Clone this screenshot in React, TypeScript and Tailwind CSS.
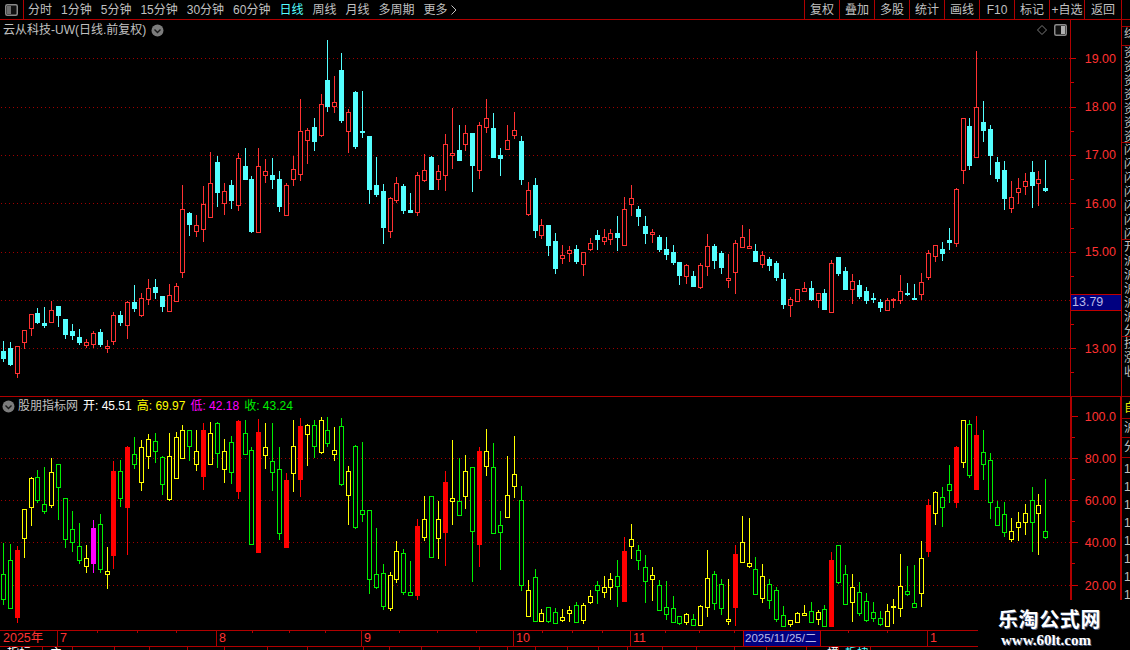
type Row = [number, number, number, number, number, string];
type Candle = { col: number; hi: number; top: number; bot: number; lo: number; kind: string };

// candles are read off 3x crops, so each block carries its crop origin
function seg(ox: number, oy: number, rows: Row[]): Candle[] {
  return rows.map(([zx, hi, top, bot, lo, kind]) => ({
    col: Math.floor(ox + zx / 3),
    hi: Math.round(oy + hi / 3),
    top: Math.round(oy + top / 3),
    bot: Math.round(oy + bot / 3),
    lo: Math.round(oy + lo / 3),
    kind,
  }));
}

const upperCandles: Candle[] = [
  ...seg(0, 270, [
    [10, 213, 243, 264, 272, "c"], [31, 216, 234, 282, 285, "c"], [52, 228, 228, 308, 320, "r"], [73, 180, 180, 215, 234, "r"],
    [94, 132, 132, 173, 195, "r"], [112, 114, 129, 156, 159, "c"], [133, 111, 159, 165, 171, "c"], [154, 93, 120, 155, 155, "r"],
    [175, 108, 108, 135, 168, "c"], [196, 147, 147, 192, 204, "c"], [217, 162, 183, 195, 207, "c"], [238, 177, 201, 216, 222, "c"],
    [259, 207, 216, 224, 231, "r"], [280, 183, 189, 221, 231, "r"], [301, 177, 186, 222, 228, "c"], [322, 210, 228, 234, 246, "r"],
    [340, 126, 135, 212, 222, "r"], [361, 123, 135, 156, 165, "c"], [382, 93, 96, 164, 204, "r"], [403, 45, 96, 114, 123, "c"],
    [424, 69, 84, 135, 138, "r"], [445, 27, 54, 87, 102, "r"], [466, 27, 51, 66, 84, "c"], [487, 78, 78, 108, 123, "c"],
    [508, 42, 75, 123, 123, "r"], [529, 39, 48, 93, 93, "r"],
  ]),
  ...seg(0, 130, [
    [547, 165, 237, 425, 441, "r"], [568, 246, 249, 282, 315, "c"], [589, 255, 285, 303, 318, "r"], [610, 168, 222, 296, 333, "r"],
    [631, 66, 159, 261, 261, "r"], [652, 78, 96, 186, 228, "c"], [673, 159, 183, 219, 252, "r"], [694, 150, 165, 210, 234, "c"],
    [715, 69, 84, 225, 240, "r"], [736, 54, 108, 147, 147, "c"], [754, 138, 147, 303, 306, "c"], [775, 54, 108, 306, 306, "r"],
    [796, 87, 123, 135, 156, "r"], [817, 84, 135, 147, 174, "c"], [838, 123, 147, 228, 243, "c"],
  ]),
  ...seg(280, 30, [
    [19, 459, 465, 555, 555, "r"], [40, 378, 417, 447, 465, "r"], [61, 207, 303, 432, 450, "r"], [82, 294, 300, 330, 399, "r"],
    [103, 264, 291, 333, 360, "c"], [124, 192, 222, 315, 318, "r"], [142, 30, 150, 228, 243, "c"], [163, 138, 216, 228, 246, "r"],
    [184, 69, 120, 270, 276, "c"], [205, 237, 246, 303, 366, "r"], [226, 183, 186, 348, 354, "c"], [247, 183, 303, 306, 321, "c"],
    [268, 318, 318, 477, 519, "c"], [289, 381, 465, 492, 498, "c"], [310, 462, 483, 591, 639, "c"], [331, 501, 504, 603, 621, "r"],
    [349, 441, 459, 510, 516, "r"], [370, 462, 468, 540, 549, "c"], [391, 489, 540, 546, 546, "c"], [412, 426, 435, 546, 555, "r"],
    [433, 372, 420, 450, 453, "r"], [454, 378, 381, 477, 477, "c"], [475, 405, 423, 447, 477, "r"], [496, 312, 342, 435, 480, "r"],
    [517, 234, 369, 375, 414, "r"], [538, 285, 360, 390, 390, "c"], [556, 285, 309, 342, 360, "r"], [577, 309, 309, 405, 483, "c"],
    [598, 276, 285, 420, 444, "r"], [619, 207, 264, 291, 306, "r"], [640, 249, 294, 381, 381, "c"], [661, 354, 375, 384, 435, "c"],
    [682, 285, 330, 357, 357, "r"], [703, 246, 300, 315, 324, "r"], [724, 318, 333, 447, 462, "c"], [745, 456, 480, 552, 555, "r"],
    [766, 444, 465, 600, 621, "c"], [784, 567, 585, 615, 624, "r"], [805, 585, 585, 645, 675, "c"], [826, 609, 633, 714, 729, "c"],
  ]),
  ...seg(560, 170, [
    [7, 225, 255, 264, 279, "r"], [28, 228, 240, 249, 273, "r"], [49, 225, 237, 273, 279, "c"], [70, 246, 246, 282, 315, "r"],
    [91, 204, 219, 237, 240, "r"], [112, 180, 195, 207, 237, "c"], [133, 177, 201, 213, 222, "r"], [151, 177, 189, 207, 222, "r"],
    [172, 138, 189, 201, 240, "c"], [193, 81, 117, 225, 225, "r"], [214, 45, 84, 102, 135, "r"], [235, 108, 117, 138, 165, "c"],
    [256, 138, 168, 189, 219, "c"], [277, 177, 186, 192, 216, "r"], [298, 195, 201, 237, 243, "c"], [319, 201, 237, 252, 267, "c"],
    [340, 225, 246, 276, 282, "c"], [358, 276, 276, 315, 342, "c"], [379, 282, 285, 318, 339, "r"], [400, 303, 318, 348, 348, "c"],
    [421, 279, 285, 351, 354, "r"], [442, 192, 228, 288, 315, "r"], [463, 222, 228, 270, 294, "c"], [484, 243, 249, 291, 309, "c"],
    [505, 252, 324, 330, 351, "r"], [526, 210, 219, 306, 369, "r"], [547, 165, 201, 231, 231, "r"], [568, 177, 228, 234, 234, "r"],
    [586, 222, 243, 273, 273, "c"], [607, 243, 255, 282, 291, "r"], [628, 261, 267, 285, 300, "c"], [649, 273, 279, 321, 330, "c"],
    [670, 309, 327, 402, 414, "c"], [691, 381, 387, 405, 438, "r"], [712, 357, 357, 393, 393, "r"], [733, 336, 354, 363, 363, "r"],
    [754, 333, 354, 387, 390, "c"], [775, 369, 369, 390, 411, "r"], [793, 357, 369, 417, 417, "c"], [814, 270, 279, 426, 426, "r"],
    [835, 261, 261, 309, 315, "c"],
  ]),
  ...seg(840, 40, [
    [16, 681, 693, 747, 747, "c"], [37, 702, 723, 747, 789, "r"], [58, 720, 735, 768, 774, "c"], [79, 741, 753, 780, 789, "c"],
    [100, 759, 774, 777, 786, "c"], [121, 777, 786, 801, 813, "c"], [142, 774, 780, 809, 809, "r"], [160, 774, 776, 779, 801, "r"],
    [181, 705, 753, 780, 789, "r"], [202, 729, 760, 763, 765, "c"], [223, 732, 775, 777, 777, "c"], [244, 699, 726, 762, 777, "r"],
    [265, 630, 639, 711, 717, "r"], [286, 615, 615, 648, 663, "r"], [307, 606, 627, 639, 660, "c"], [328, 564, 600, 606, 627, "c"],
    [349, 444, 447, 609, 618, "r"], [370, 234, 234, 390, 429, "r"], [388, 234, 258, 375, 387, "c"], [409, 33, 201, 351, 351, "r"],
    [430, 183, 246, 270, 303, "c"], [451, 255, 267, 345, 402, "c"], [472, 351, 366, 414, 423, "c"], [493, 363, 390, 474, 507, "c"],
    [514, 423, 471, 504, 516, "r"], [535, 414, 444, 456, 489, "r"], [556, 399, 423, 438, 462, "r"], [577, 363, 396, 435, 501, "c"],
    [595, 393, 417, 429, 495, "r"], [616, 360, 444, 450, 453, "c"],
  ]),
];

const lowerCandles: Candle[] = [
  ...seg(0, 395, [
    [10, 444, 537, 612, 627, "g"], [31, 447, 495, 639, 639, "g"], [52, 453, 465, 666, 681, "R"], [73, 342, 342, 429, 486, "y"],
    [94, 247, 249, 336, 390, "y"], [112, 225, 246, 315, 321, "g"], [133, 216, 327, 348, 354, "g"], [154, 189, 231, 330, 336, "y"],
    [175, 207, 207, 276, 372, "g"], [196, 309, 309, 432, 456, "g"], [217, 348, 402, 441, 468, "g"], [238, 384, 453, 495, 504, "g"],
    [259, 450, 489, 513, 531, "y"], [280, 375, 399, 504, 531, "m"], [301, 357, 387, 522, 531, "g"], [322, 456, 528, 537, 579, "y"],
    [340, 198, 228, 480, 519, "R"], [361, 195, 228, 309, 333, "g"], [382, 153, 156, 336, 477, "R"], [403, 126, 177, 207, 219, "g"],
    [424, 135, 156, 261, 285, "y"], [445, 117, 132, 183, 219, "y"], [466, 114, 138, 168, 201, "g"], [487, 183, 186, 267, 297, "g"],
    [508, 114, 183, 312, 315, "y"], [529, 111, 126, 249, 249, "y"], [547, 90, 105, 189, 189, "y"], [568, 105, 105, 153, 195, "g"],
    [589, 105, 168, 207, 225, "y"], [610, 84, 105, 243, 282, "R"], [631, 81, 114, 207, 207, "y"], [652, 81, 84, 174, 216, "g"],
    [673, 132, 168, 222, 261, "y"], [694, 123, 141, 231, 264, "g"], [715, 75, 78, 288, 309, "R"], [736, 75, 114, 177, 177, "g"],
    [754, 156, 165, 447, 447, "g"], [775, 72, 111, 471, 471, "R"], [796, 84, 156, 180, 219, "y"], [817, 84, 198, 231, 285, "g"],
    [838, 156, 222, 414, 432, "g"], [859, 234, 255, 456, 456, "R"], [880, 75, 153, 234, 288, "y"], [901, 69, 93, 252, 303, "R"],
    [922, 87, 90, 117, 210, "y"], [943, 75, 90, 153, 186, "g"], [964, 66, 75, 171, 174, "y"], [982, 66, 105, 144, 153, "g"],
    [1003, 96, 165, 177, 195, "y"], [1024, 69, 93, 267, 270, "g"], [1045, 213, 228, 300, 387, "y"], [1066, 150, 153, 396, 399, "g"],
  ]),
  ...seg(360, 395, [
    [7, 141, 345, 357, 378, "g"], [28, 345, 345, 552, 594, "g"], [49, 399, 537, 576, 579, "g"], [70, 507, 534, 633, 642, "g"],
    [91, 531, 540, 639, 645, "y"], [109, 438, 468, 552, 561, "y"], [130, 462, 474, 591, 597, "g"], [151, 498, 591, 600, 600, "g"],
    [172, 372, 393, 600, 612, "R"], [193, 303, 372, 426, 435, "y"], [214, 303, 303, 486, 486, "g"], [235, 318, 372, 429, 489, "y"],
    [256, 228, 261, 411, 510, "R"], [277, 135, 309, 318, 387, "y"], [298, 189, 318, 360, 360, "g"], [316, 180, 228, 303, 339, "y"],
    [337, 216, 216, 408, 558, "g"], [358, 156, 168, 447, 513, "R"], [379, 102, 168, 213, 240, "y"], [400, 144, 216, 414, 414, "g"],
    [421, 348, 390, 411, 522, "g"], [442, 183, 300, 366, 366, "y"], [463, 123, 237, 273, 306, "y"], [484, 273, 315, 570, 585, "g"],
    [505, 555, 585, 663, 663, "y"], [526, 522, 546, 678, 678, "g"], [544, 642, 654, 678, 678, "y"], [565, 636, 636, 678, 681, "g"],
    [586, 639, 651, 684, 684, "g"], [607, 642, 666, 675, 678, "y"], [628, 633, 645, 654, 678, "y"], [649, 621, 630, 681, 681, "g"],
    [670, 624, 630, 675, 684, "y"], [691, 585, 603, 621, 624, "y"], [712, 558, 570, 585, 624, "g"], [733, 543, 576, 591, 606, "y"],
    [751, 534, 552, 576, 612, "y"], [772, 495, 543, 573, 633, "g"], [793, 426, 468, 618, 618, "R"], [814, 387, 432, 453, 489, "y"],
    [835, 450, 465, 495, 522, "g"], [856, 480, 516, 558, 621, "g"], [877, 516, 540, 552, 615, "y"], [898, 555, 570, 645, 645, "g"],
    [919, 558, 636, 657, 672, "g"], [940, 603, 639, 681, 681, "g"], [958, 663, 663, 684, 687, "g"], [979, 654, 657, 681, 687, "y"],
    [1000, 657, 672, 690, 690, "g"], [1021, 630, 633, 690, 690, "y"], [1042, 465, 549, 636, 663, "y"], [1063, 528, 537, 624, 642, "g"],
  ]),
  ...seg(720, 395, [
    [4, 552, 567, 639, 657, "g"], [25, 552, 672, 678, 687, "y"], [46, 450, 477, 636, 690, "R"], [67, 363, 441, 501, 501, "y"],
    [88, 369, 504, 513, 516, "y"], [106, 486, 522, 597, 597, "g"], [127, 507, 543, 609, 621, "y"], [148, 552, 567, 615, 639, "g"],
    [169, 576, 585, 672, 678, "g"], [190, 633, 660, 693, 693, "g"], [211, 675, 675, 687, 693, "y"], [232, 651, 654, 681, 681, "y"],
    [253, 630, 654, 659, 660, "y"], [274, 621, 648, 681, 681, "g"], [295, 645, 651, 672, 687, "y"], [313, 630, 642, 693, 693, "g"],
    [334, 471, 495, 693, 693, "R"], [355, 450, 450, 561, 564, "g"], [376, 510, 537, 627, 627, "g"], [397, 537, 576, 621, 678, "y"],
    [418, 561, 591, 654, 660, "g"], [439, 594, 618, 675, 678, "g"], [460, 621, 651, 669, 678, "g"], [481, 648, 669, 687, 690, "g"],
    [502, 627, 648, 693, 693, "y"], [520, 612, 633, 636, 684, "y"], [541, 477, 573, 639, 663, "y"], [562, 513, 588, 597, 600, "g"],
    [583, 510, 624, 636, 636, "g"], [604, 438, 489, 594, 633, "y"], [625, 312, 330, 468, 483, "R"], [646, 288, 291, 354, 387, "y"],
    [667, 276, 306, 336, 393, "g"], [688, 210, 267, 285, 321, "g"], [709, 153, 156, 321, 336, "R"], [730, 75, 75, 201, 216, "y"],
    [748, 75, 87, 240, 246, "g"], [769, 63, 120, 282, 282, "R"], [790, 105, 171, 207, 252, "g"], [811, 174, 195, 321, 369, "g"],
    [832, 318, 336, 390, 390, "g"], [853, 321, 357, 411, 423, "g"], [874, 369, 408, 432, 438, "y"], [895, 351, 381, 396, 435, "y"],
    [916, 327, 354, 381, 417, "y"], [937, 276, 315, 381, 468, "g"], [955, 297, 330, 354, 477, "y"], [976, 252, 408, 426, 429, "g"],
  ]),
];

const candleColors: Record<string, { color: string; filled: boolean }> = {
  c: { color: "#54ffff", filled: true },
  r: { color: "#ff3232", filled: false },
  g: { color: "#00f000", filled: false },
  y: { color: "#ffff00", filled: false },
  R: { color: "#ff0000", filled: true },
  m: { color: "#ff00ff", filled: true },
};

// one pixel every fourth column, drawn as rects since dash arrays came out too heavy
const gridDots = Array.from({ length: 268 }, (_, i) => i * 4 + 1);

function CandleChart({ candles, top, height, grid }: { candles: Candle[]; top: number; height: number; grid: number[] }) {
  return (
    <svg
      className="absolute inset-0"
      width={1070}
      height={height}
      viewBox={`0 ${top} 1070 ${height}`}
      shapeRendering="crispEdges"
    >
      {grid.map((y) => (
        <g key={y} fill="#a00000">
          {gridDots.map((x) => (
            <rect key={x} x={x} y={y} width={1} height={1} />
          ))}
        </g>
      ))}
      {candles.map((c, i) => {
        const { color, filled } = candleColors[c.kind];
        return (
          <g key={i}>
            <rect x={c.col} y={c.hi} width={1} height={c.lo - c.hi + 1} fill={color} />
            {filled ? (
              <rect x={c.col - 2} y={c.top} width={5} height={c.bot - c.top + 1} fill={color} />
            ) : (
              <rect x={c.col - 1.5} y={c.top + 0.5} width={4} height={c.bot - c.top} fill="#000" stroke={color} />
            )}
          </g>
        );
      })}
    </svg>
  );
}

function AxisTicks({ top, height, majors, minors, major }: { top: number; height: number; majors: number[]; minors: number[]; major: number }) {
  return (
    <svg className="absolute inset-0" width={48} height={height} viewBox={`0 ${top} 48 ${height}`} shapeRendering="crispEdges">
      {majors.map((y) => (
        <rect key={y} x={0} y={y} width={major} height={1} fill="#d00000" />
      ))}
      {minors.map((y) => (
        <rect key={y} x={0} y={y} width={3} height={1} fill="#d00000" />
      ))}
    </svg>
  );
}

function HalfIcon({ side }: { side: "left" | "right" }) {
  return (
    <svg width="13" height="12" viewBox="0 0 13 12">
      <rect x="0.75" y="0.75" width="11.5" height="10.5" rx="1.5" fill="#111" stroke="#8a8a8a" strokeWidth="1.5" />
      <rect x={side === "left" ? 2 : 7} y="2" width="4" height="8" fill={side === "left" ? "#6e6e6e" : "#b0b0b0"} />
    </svg>
  );
}

function ChevronBadge() {
  return (
    <svg width="13" height="13" viewBox="0 0 13 13">
      <circle cx="6.5" cy="6.5" r="6" fill="#7c7c7c" />
      <path d="M3.5 5.5 L6.5 8.5 L9.5 5.5" fill="none" stroke="#1a1a1a" strokeWidth="1.4" />
    </svg>
  );
}

const navItems = ["分时", "1分钟", "5分钟", "15分钟", "30分钟", "60分钟", "日线", "周线", "月线", "多周期"];
const actions = ["复权", "叠加", "多股", "统计", "画线", "F10", "标记", "+自选"];

// the 14.00 row sits behind the crosshair price tag, so it stays blank
const upperLabels = ["19.00", "18.00", "17.00", "16.00", "15.00", "", "13.00"];
const lowerLabels = ["100.0", "80.00", "60.00", "40.00", "20.00"];

const timeTicks = [97, 137, 176, 252, 289, 325, 399, 437, 476, 542, 572, 602, 665, 699, 734, 848, 887];
const bottomTabs: { w: number; text?: string; pad?: number; cyan?: boolean }[] = [
  { w: 43, text: "指标", pad: 7 },
  { w: 30, text: "主", pad: 7 },
  { w: 42 }, { w: 35 }, { w: 38 }, { w: 37 }, { w: 43 }, { w: 40 }, { w: 56 }, { w: 26 }, { w: 32 },
  { w: 58 }, { w: 28 }, { w: 28 }, { w: 32 }, { w: 31 }, { w: 29 }, { w: 35 }, { w: 34 }, { w: 38 }, { w: 32 }, { w: 40 },
  { w: 32, text: "模", pad: 20 },
  { w: 32, text: "板块", pad: 6, cyan: true },
];

const sideSections: { h: number; glyphs: string; rowH?: number; pad?: number; color?: string }[] = [
  { h: 19, glyphs: "综" },
  { h: 97, glyphs: "资资资资资资资" },
  { h: 97, glyphs: "闪闪闪闪闪闪闪" },
  { h: 97, glyphs: "开沪沪沪沪沪分" },
  { h: 60, glyphs: "技涨收" },
  { h: 22, glyphs: "自", pad: 4, color: "text-[#e8e800]" },
  { h: 19, glyphs: "沪", pad: 2 },
  { h: 20, glyphs: "分", pad: 2 },
  { h: 150, glyphs: "11111111", rowH: 18, pad: 4 },
];

export default function App() {
  return (
    <div className="relative flex h-[650px] w-[1130px] flex-col overflow-hidden bg-black font-['Liberation_Sans','Noto_Sans_CJK_SC',sans-serif] text-xs text-[#c0c0c0]">
      {/* top toolbar */}
      <div className="flex h-5 shrink-0 items-stretch border-b border-[#b00000]">
        <div className="flex w-6 items-center justify-center border-r border-[#b00000]">
          <HalfIcon side="left" />
        </div>
        <div className="ml-1 flex items-center gap-[9px]">
          {navItems.map((item) => (
            <span key={item} className={item === "日线" ? "text-[#54ffff]" : ""}>
              {item}
            </span>
          ))}
          <span className="flex items-center gap-[3px]">
            更多
            <svg width="6" height="10" viewBox="0 0 6 10">
              <path d="M0.5 0.5 L5 5 L0.5 9.5" fill="none" stroke="#c0c0c0" />
            </svg>
          </span>
        </div>
        <div className="ml-auto flex">
          {actions.map((item) => (
            <div key={item} className="flex w-[35px] items-center justify-center border-l border-[#b00000]">
              {item}
            </div>
          ))}
          <div className="flex w-[38px] items-center justify-center border-x border-[#b00000]">返回</div>
        </div>
        <div className="w-2" />
      </div>

      <div className="flex min-h-0 flex-1">
        <div className="flex w-[1122px] flex-col">
          {/* price pane */}
          <div className="flex h-[377px] border-b border-[#b00000]">
            <div className="relative w-[1070px]">
              <CandleChart candles={upperCandles} top={20} height={376} grid={[58, 107, 155, 203, 252, 300, 348]} />
              <div className="relative flex items-center gap-[5px] pl-[3px] pt-0.5">
                <span>云从科技-UW(日线.前复权)</span>
                <ChevronBadge />
              </div>
              <div className="absolute right-[3px] top-1 flex items-center gap-[7px]">
                <svg width="10" height="10" viewBox="0 0 10 10">
                  <path d="M5 0.5 L9.5 5 L5 9.5 L0.5 5 Z" fill="none" stroke="#7a7a7a" />
                </svg>
                <HalfIcon side="right" />
              </div>
            </div>
            <div className="relative w-[52px] border-x border-[#b00000] text-[#ff3232]">
              <AxisTicks
                top={20}
                height={376}
                major={5}
                majors={[58, 107, 155, 203, 252, 300, 348]}
                minors={[82, 131, 179, 228, 276, 324, 372]}
              />
              <div className="flex flex-col pt-[15px] text-[12.5px]">
                {upperLabels.map((label, i) => (
                  <div key={i} className="flex h-[48.3px] items-center justify-end pr-[5px]">
                    {label}
                  </div>
                ))}
              </div>
              <div className="absolute left-0 top-[274px] h-[17px] w-full border-y border-[#c00000] bg-[#000080] pl-px text-[12.5px] leading-[15px] text-[#b8b8e8]">
                13.79
              </div>
            </div>
          </div>

          {/* indicator pane */}
          <div className="flex h-[233px]">
            <div className="relative w-[1070px]">
              <CandleChart candles={lowerCandles} top={397} height={233} grid={[458, 500, 542, 585]} />
              <div className="relative flex items-center pl-0.5 pt-px">
                <ChevronBadge />
                <span className="ml-[3px]">股朋指标网</span>
                <span className="ml-[5px] text-white">开: 45.51</span>
                <span className="ml-[5px] text-[#ffff00]">高: 69.97</span>
                <span className="ml-[5px] text-[#ff00ff]">低: 42.18</span>
                <span className="ml-[5px] text-[#00f000]">收: 43.24</span>
              </div>
            </div>
            <div className="relative w-[52px] border-x-2 border-[#b00000] text-[#ff3232]">
              <AxisTicks
                top={397}
                height={233}
                major={6}
                majors={[416, 458, 500, 542, 585]}
                minors={[437, 479, 521, 563, 606]}
              />
              <div className="-mt-px flex flex-col text-[12.5px]">
                {lowerLabels.map((label) => (
                  <div key={label} className="flex h-[42.2px] items-center justify-end pr-1">
                    {label}
                  </div>
                ))}
              </div>
            </div>
          </div>

          {/* time axis */}
          <div className="relative flex h-[17px] w-[978px] border-y border-[#b00000] text-[12.5px] leading-[15px] text-[#ff3232]">
            <svg className="absolute left-0 top-0" width="978" height="3" shapeRendering="crispEdges">
              {timeTicks.map((x) => (
                <rect key={x} x={x} y={0} width={1} height={2} fill="#b00000" />
              ))}
            </svg>
            <div className="w-[57px] pl-[3px]">2025年</div>
            <div className="w-[159px] border-l border-[#b00000] pl-0.5">7</div>
            <div className="w-[145px] border-l border-[#b00000] pl-0.5">8</div>
            <div className="w-[152px] border-l border-[#b00000] pl-0.5">9</div>
            <div className="w-[117px] border-l border-[#b00000] pl-0.5">10</div>
            <div className="w-[113px] border-l border-[#b00000] pl-0.5">11</div>
            <div className="w-[78px] whitespace-nowrap border-x border-[#c00000] bg-[#000080] pl-px text-[11.5px] leading-[15px] text-[#b8b8e8]">
              2025/11/25/二
            </div>
            <div className="w-[106px]" />
            <div className="w-[51px] border-l border-[#b00000] pl-0.5">1</div>
          </div>

          {/* bottom tabs, cut off by the window */}
          <div className="flex h-[3px] overflow-hidden leading-[13px]">
            {bottomTabs.map((tab, i) => (
              <div
                key={i}
                style={{ width: tab.w, paddingLeft: tab.pad }}
                className={`shrink-0 overflow-hidden whitespace-nowrap border-r border-[#b00000] ${tab.cyan ? "text-[#54ffff]" : "text-white"}`}
              >
                {tab.text}
              </div>
            ))}
          </div>
        </div>

        {/* side tabs, clipped at the window edge */}
        <div className="flex w-2 flex-col overflow-hidden pt-[6px]">
          {sideSections.map((section, i) => (
            <div
              key={i}
              style={{ height: section.h, paddingTop: section.pad }}
              className={`w-2 shrink-0 overflow-hidden border-t border-[#a00000] pl-[2px] ${section.color ?? ""}`}
            >
              {section.glyphs.split("").map((g, j) => (
                <div key={j} style={{ height: section.rowH ?? 14 }} className="w-3 leading-[14px]">
                  {g}
                </div>
              ))}
            </div>
          ))}
        </div>
      </div>

      {/* site watermark */}
      <div className="absolute bottom-0 right-0 flex h-[50px] w-[152px] flex-col items-start bg-black pl-5 pt-[7px]">
        <span className="text-[20px] font-bold leading-[26px] tracking-[0.6px] text-white [text-shadow:1px_1px_0_#4a5a80]">乐淘公式网</span>
        <span className="ml-[3px] font-['Liberation_Serif',serif] text-[15px] font-bold leading-[14px] text-white [text-shadow:1px_1px_0_#4a5a80]">
          www.60lt.com
        </span>
      </div>
    </div>
  );
}
